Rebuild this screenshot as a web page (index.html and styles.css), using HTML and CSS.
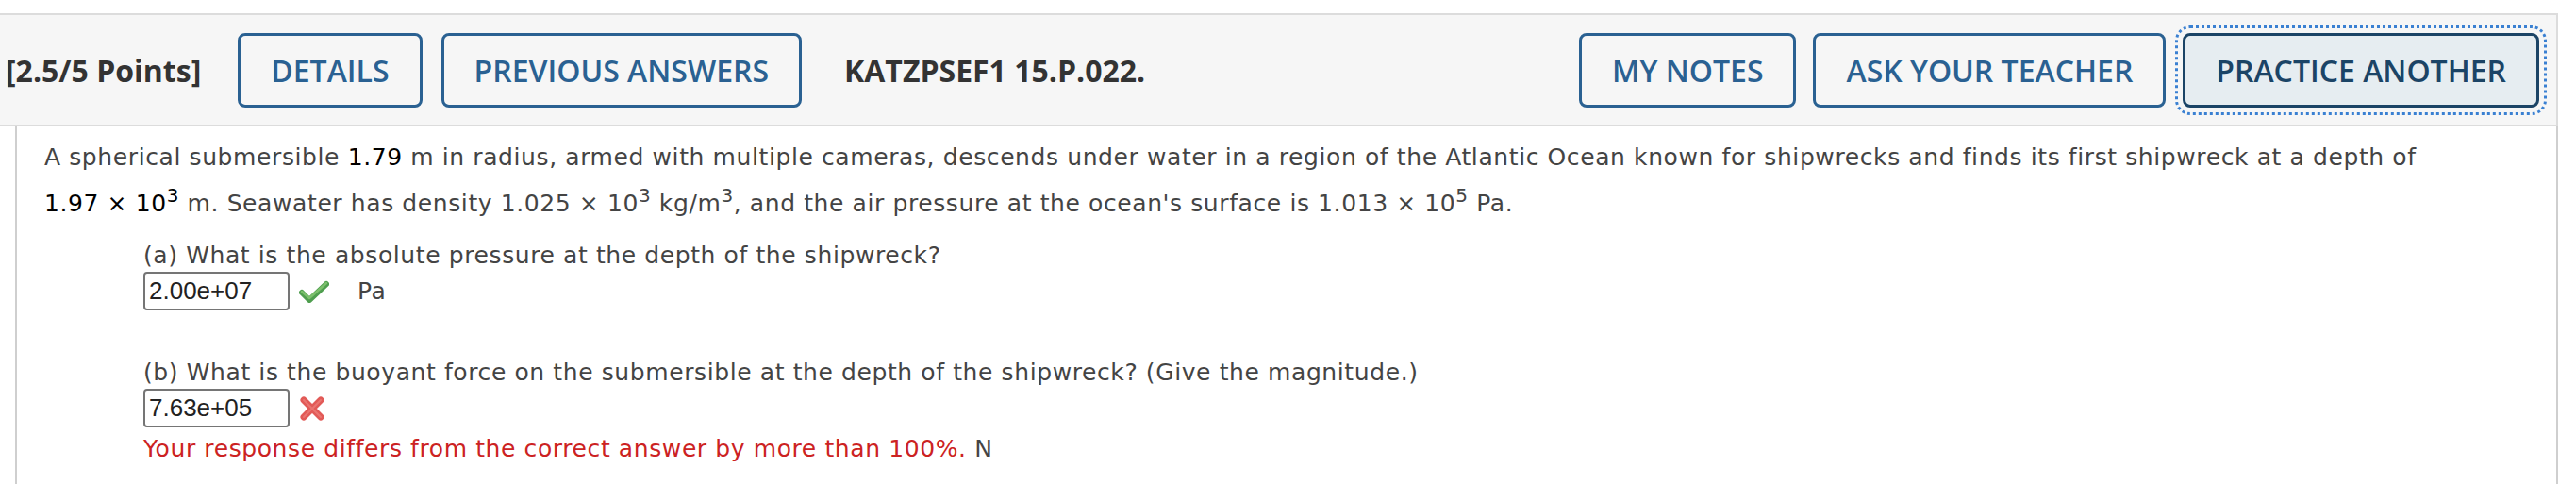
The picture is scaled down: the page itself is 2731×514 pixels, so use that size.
FILE: index.html
```html
<!DOCTYPE html>
<html>
<head>
<meta charset="utf-8">
<link rel="stylesheet" href="styles.css">
</head>
<body>
<div class="page">
  <div class="qhead">
    <div class="points">[2.5/5 Points]</div>
    <button class="btn">DETAILS</button>
    <button class="btn">PREVIOUS ANSWERS</button>
    <div class="qid">KATZPSEF1 15.P.022.</div>
    <div class="right">
      <button class="btn">MY NOTES</button>
      <button class="btn">ASK YOUR TEACHER</button>
      <button class="btn btn-focus">PRACTICE ANOTHER</button>
    </div>
  </div>
  <div class="qbody">
    <p class="para">A spherical submersible <span class="val">1.79</span> m in radius, armed with multiple cameras, descends under water in a region of the Atlantic Ocean known for shipwrecks and finds its first shipwreck at a depth of <span class="val">1.97 &times; 10<sup>3</sup></span> m. Seawater has density <span class="num">1.025 &times; 10<sup>3</sup></span> kg/m<sup>3</sup>, and the air pressure at the ocean's surface is <span class="num">1.013 &times; 10<sup>5</sup></span> Pa.</p>
    <div class="part part-a">
      <div class="question">(a) What is the absolute pressure at the depth of the shipwreck?</div>
      <div class="answer">
        <span class="input">2.00e+07</span>
        <svg class="check" width="32" height="24" viewBox="0 0 32 24">
          <path d="M3 13 L11 21 L29 4" fill="none" stroke="#4f9e4f" stroke-width="6" stroke-linecap="round" stroke-linejoin="round"/>
          <path d="M3 12 L11 19 L29 3" fill="none" stroke="#7cc06c" stroke-width="2.5" stroke-linecap="round" stroke-linejoin="round"/>
        </svg>
        <span class="unit">Pa</span>
      </div>
    </div>
    <div class="part part-b">
      <div class="question">(b) What is the buoyant force on the submersible at the depth of the shipwreck? (Give the magnitude.)</div>
      <div class="answer">
        <span class="input">7.63e+05</span>
        <svg class="cross" width="28" height="26" viewBox="0 0 28 26">
          <path d="M5 4 L23 22 M23 4 L5 22" fill="none" stroke="#e25a57" stroke-width="7" stroke-linecap="round"/>
          <path d="M5 4 L23 22 M23 4 L5 22" fill="none" stroke="#ea7571" stroke-width="2" stroke-linecap="round"/>
        </svg>
      </div>
      <div class="error"><span class="errtext">Your response differs from the correct answer by more than 100%.</span> N</div>
    </div>
  </div>
</div>
</body>
</html>
```
FILE: styles.css
```css
html, body {
  margin: 0;
  padding: 0;
  background: #ffffff;
}
.page {
  width: 2712px;
  padding-top: 14px;
}
.qhead {
  display: flex;
  align-items: center;
  height: 116px;
  background: #f6f6f6;
  border: 2px solid #dcdcdc;
  border-left: none;
  padding: 0 18px 0 6px;
  font-family: "Open Sans", "Liberation Sans", sans-serif;
}
.points {
  font-size: 32px;
  font-weight: 700;
  color: #333333;
  margin-right: 39px;
}
.qid {
  font-size: 32px;
  font-weight: 700;
  color: #333333;
  margin-left: 45px;
}
.right {
  margin-left: auto;
  display: flex;
  gap: 18px;
}
.btn {
  font-family: "Open Sans", "Liberation Sans", sans-serif;
  font-size: 32px;
  font-weight: 600;
  line-height: 41px;
  color: #2a6192;
  background: #f6f6f6;
  border: 3px solid #2a6192;
  border-radius: 8px;
  padding: 16px 32px;
  margin: 0;
}
.btn + .btn {
  margin-left: 20px;
}
.right .btn + .btn {
  margin-left: 0;
}
.btn-focus {
  background: #e6edf1;
  border-color: #1b4466;
  color: #1b4466;
  outline: 3px dotted #3a80d2;
  outline-offset: 5px;
}
.qbody {
  margin-left: 16px;
  border-left: 2px solid #cfcfcf;
  border-right: 2px solid #cfcfcf;
  padding: 8px 0 20px 29px;
  font-family: Verdana, "DejaVu Sans", sans-serif;
  font-size: 25px;
  letter-spacing: 0.6px;
  color: #444444;
}
.para {
  margin: 0;
  line-height: 49px;
}
.val {
  color: #000000;
  white-space: nowrap;
}
.num {
  white-space: nowrap;
}
sup {
  font-size: 0.8em;
  line-height: 0;
  vertical-align: 0.5em;
}
.part {
  margin-left: 105px;
}
.part-a {
  margin-top: 14px;
}
.part-b {
  margin-top: 49px;
}
.question {
  line-height: 34px;
}
.answer {
  display: flex;
  align-items: center;
  height: 41px;
}
.input {
  box-sizing: border-box;
  width: 155px;
  height: 41px;
  border: 2px solid #757575;
  border-radius: 4px;
  padding: 0 4px;
  font-family: "Liberation Sans", Arial, sans-serif;
  font-size: 26px;
  letter-spacing: 0;
  line-height: 37px;
  color: #222222;
}
.check {
  margin-left: 10px;
}
.cross {
  margin-left: 10px;
}
.unit {
  margin-left: 30px;
}
.error {
  margin-top: 6px;
  line-height: 34px;
}
.errtext {
  color: #cc2222;
}
```
